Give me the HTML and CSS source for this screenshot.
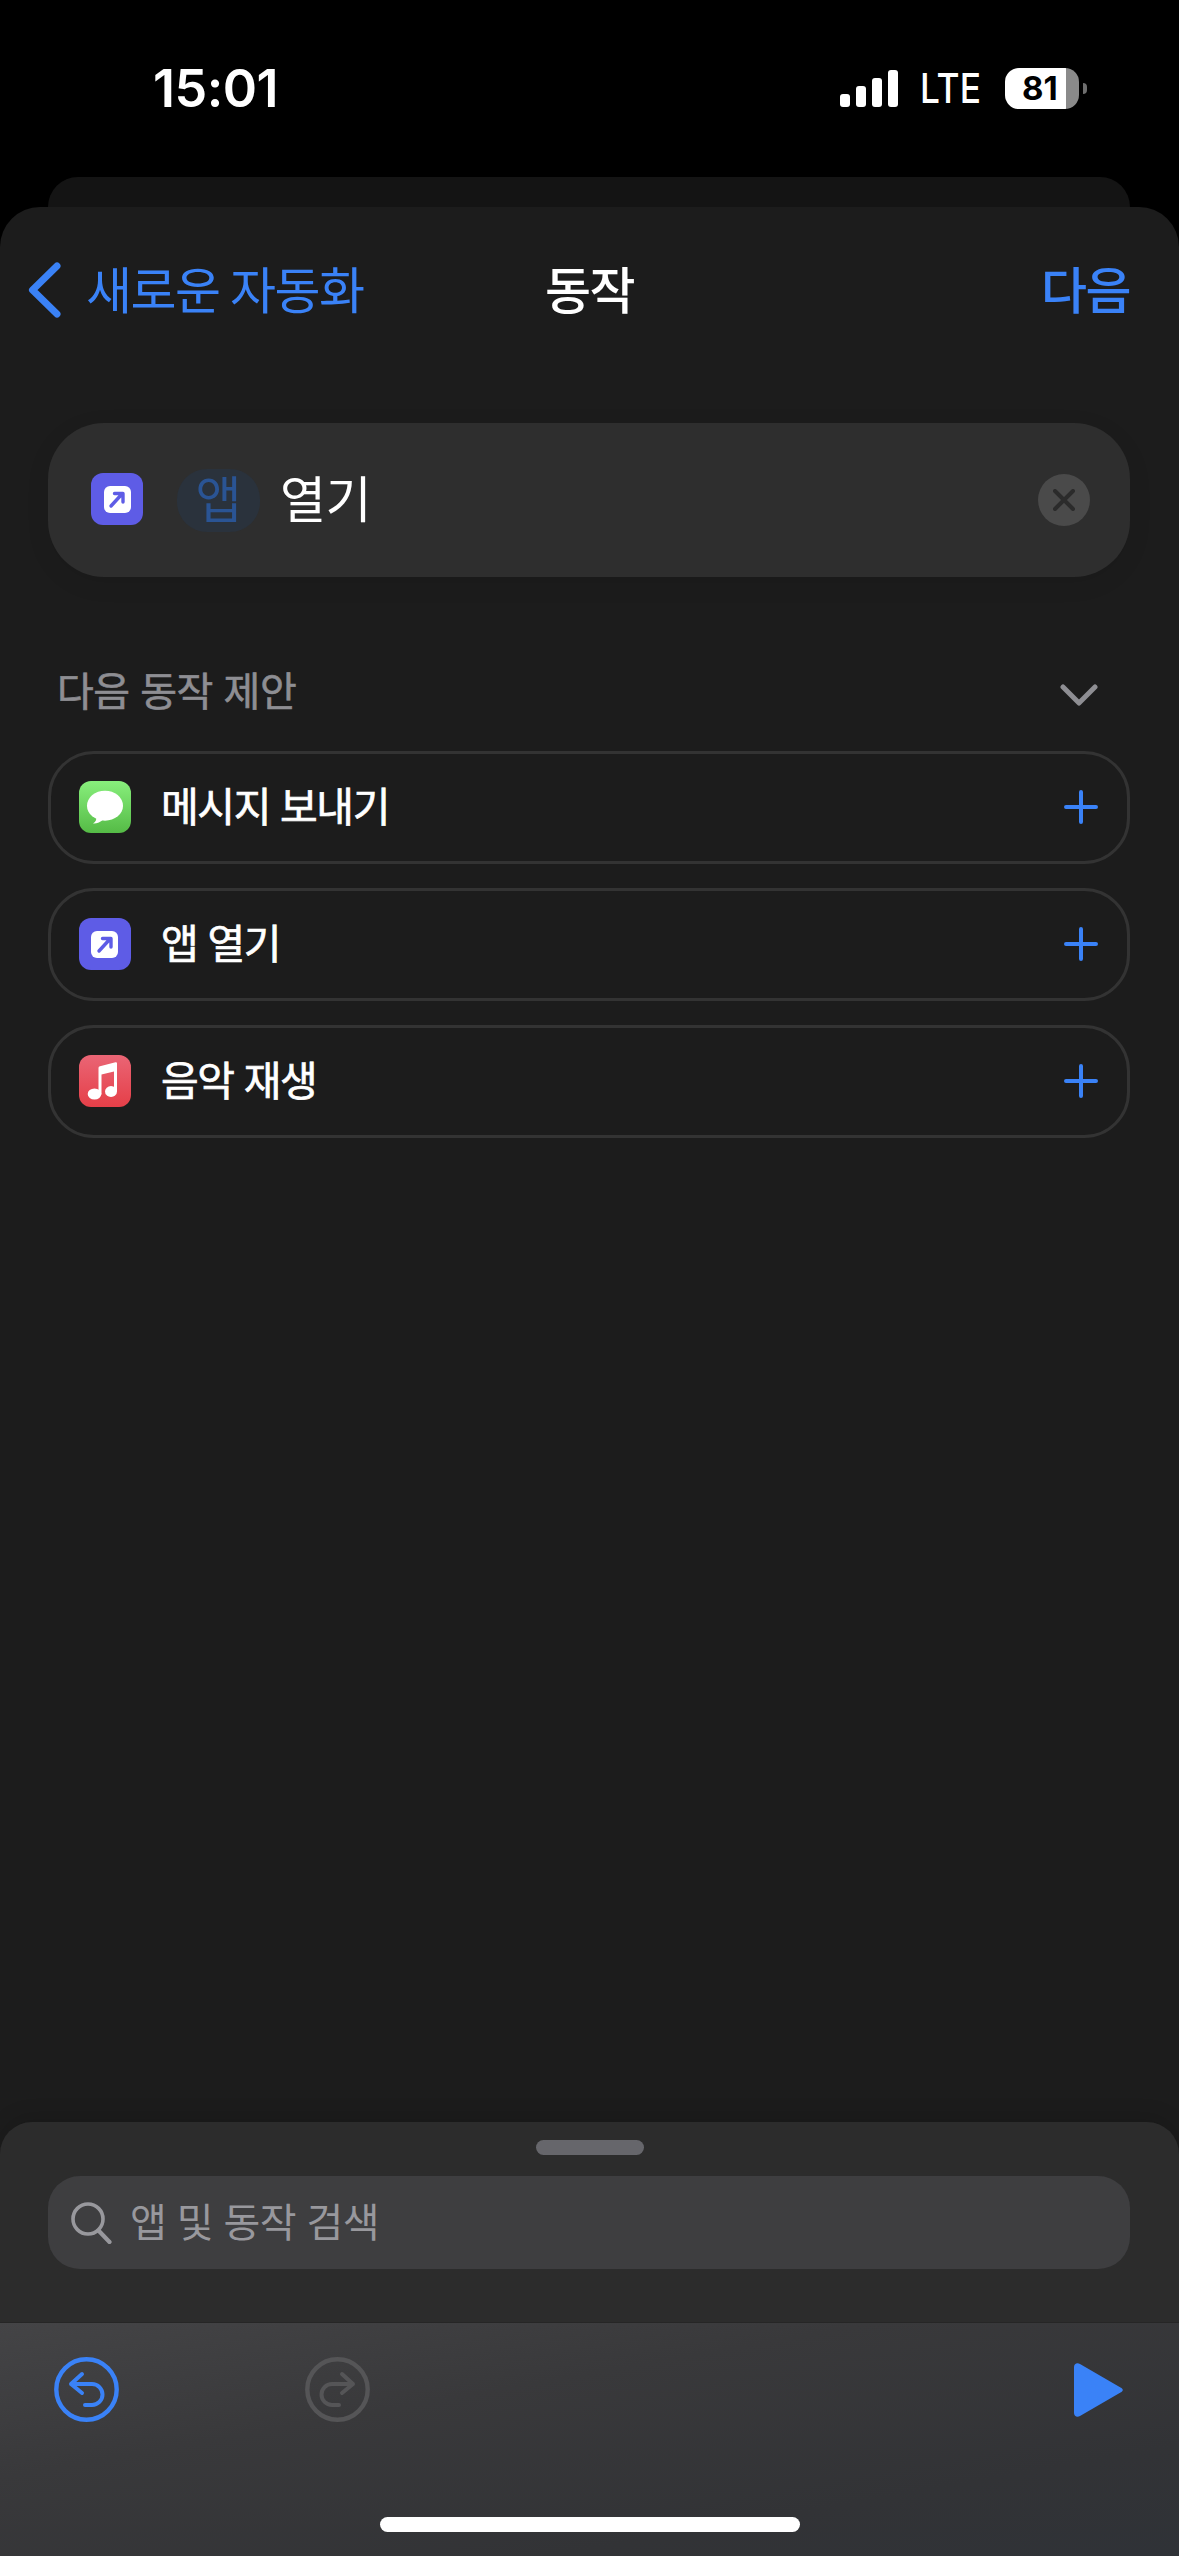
FILE: index.html
```html
<!DOCTYPE html>
<html lang="ko">
<head>
    <meta charset="UTF-8">
    <meta name="viewport" content="width=device-width, initial-scale=1.0">
    <title>동작</title>
    <link rel="stylesheet" href="styles.css">
</head>
<body>
<div class="phone">

    <div class="status-bar">
        <span class="time">15:01</span>
        <div class="status-icons">
            <div class="signal">
                <span class="bar bar1"></span>
                <span class="bar bar2"></span>
                <span class="bar bar3"></span>
                <span class="bar bar4"></span>
            </div>
            <span class="lte">LTE</span>
            <div class="battery">
                <div class="battery-body"><span>81</span></div>
                <span class="battery-cap"></span>
            </div>
        </div>
    </div>

    <div class="back-card"></div>

    <div class="sheet">
        <nav class="nav">
            <a class="nav-back">
                <svg class="nav-chevron" width="33" height="56" viewBox="0 0 33 56"><path d="M29 4 L4.500 28 L29 52" fill="none" stroke="#3a82f7" stroke-width="7" stroke-linecap="round" stroke-linejoin="round"/></svg>
                <span>새로운 자동화</span>
            </a>
            <span class="nav-title">동작</span>
            <a class="nav-next">다음</a>
        </nav>

        <div class="content">
            <div class="action-card">
                <svg class="app-icon" width="52" height="52" viewBox="0 0 52 52">
                    <rect width="52" height="52" rx="12" fill="#5e5ce6"/>
                    <rect x="13" y="13" width="27" height="27" rx="6" fill="#fff"/>
                    <path d="M20 33 L31 21 M23.500 20.500 H32 V29" fill="none" stroke="#5e5ce6" stroke-width="3.4" stroke-linecap="round" stroke-linejoin="round"/>
                </svg>
                <span class="chip">앱</span>
                <span class="action-name">열기</span>
                <span class="remove">
                    <svg width="22" height="22" viewBox="0 0 22 22"><path d="M2 2 L20 20 M20 2 L2 20" stroke="#2b2b2b" stroke-width="4" stroke-linecap="round"/></svg>
                </span>
            </div>

            <div class="suggest-head">
                <span class="head-label">다음 동작 제안</span>
                <svg class="head-chevron" width="38" height="23" viewBox="0 0 38 23"><path d="M3 3 L19 19 L35 3" fill="none" stroke="#8e8e93" stroke-width="5" stroke-linecap="round" stroke-linejoin="round"/></svg>
            </div>

            <div class="suggest-list">
                <div class="suggest-row">
                    <svg class="app-icon" width="52" height="52" viewBox="0 0 52 52">
                        <defs><linearGradient id="msgGreen" x1="0" y1="0" x2="0" y2="1"><stop offset="0" stop-color="#88ef7c"/><stop offset="1" stop-color="#55bb46"/></linearGradient></defs>
                        <rect width="52" height="52" rx="12" fill="url(#msgGreen)"/>
                        <ellipse cx="26" cy="24.7" rx="18" ry="15" fill="#fff"/>
                        <path d="M14 42.500 C17 41 18 38 17 34 L25 38 C21 41.500 17 43 14 42.500 Z" fill="#fff"/>
                    </svg>
                    <span class="row-label">메시지 보내기</span>
                    <svg class="plus" width="34" height="34" viewBox="0 0 34 34"><path d="M17 2 V32 M2 17 H32" stroke="#3a82f7" stroke-width="4" stroke-linecap="round"/></svg>
                </div>
                <div class="suggest-row">
                    <svg class="app-icon" width="52" height="52" viewBox="0 0 52 52">
                        <rect width="52" height="52" rx="12" fill="#5e5ce6"/>
                        <rect x="12" y="13" width="27" height="27" rx="6" fill="#fff"/>
                        <path d="M20 33 L31 21 M23.500 20.500 H32 V29" fill="none" stroke="#5e5ce6" stroke-width="3.4" stroke-linecap="round" stroke-linejoin="round"/>
                    </svg>
                    <span class="row-label">앱 열기</span>
                    <svg class="plus" width="34" height="34" viewBox="0 0 34 34"><path d="M17 2 V32 M2 17 H32" stroke="#3a82f7" stroke-width="4" stroke-linecap="round"/></svg>
                </div>
                <div class="suggest-row">
                    <svg class="app-icon" width="52" height="52" viewBox="0 0 52 52">
                        <defs><linearGradient id="musicRed" x1="0" y1="0" x2="0" y2="1"><stop offset="0" stop-color="#ea6575"/><stop offset="1" stop-color="#e53f48"/></linearGradient></defs>
                        <rect width="52" height="52" rx="12" fill="url(#musicRed)"/>
                        <path d="M19.500 13 C19.500 12 20 11.400 21 11.200 L36.500 7.200 C37.600 7 38 7.600 38 8.600 V36.500 H35 V16.500 L22.500 19.600 V39.500 H19.500 Z" fill="#fff"/>
                        <ellipse cx="15.500" cy="39" rx="6.800" ry="5.600" fill="#fff"/>
                        <ellipse cx="32" cy="36.500" rx="6" ry="5.400" fill="#fff"/>
                    </svg>
                    <span class="row-label">음악 재생</span>
                    <svg class="plus" width="34" height="34" viewBox="0 0 34 34"><path d="M17 2 V32 M2 17 H32" stroke="#3a82f7" stroke-width="4" stroke-linecap="round"/></svg>
                </div>
            </div>
        </div>

        <div class="drawer">
            <span class="grabber"></span>
            <div class="search">
                <svg width="41" height="42" viewBox="0 0 41 42"><circle cx="17" cy="17" r="15" fill="none" stroke="#98989d" stroke-width="3.6"/><path d="M27.500 28.500 L38.500 40" stroke="#98989d" stroke-width="4.2" stroke-linecap="round"/></svg>
                <span class="search-label">앱 및 동작 검색</span>
            </div>
        </div>

        <div class="toolbar">
            <div class="tool-row">
                <svg width="65" height="65" viewBox="0 0 65 65">
                    <circle cx="32.500" cy="32.500" r="30.200" fill="none" stroke="#3a82f7" stroke-width="4.4"/>
                    <path d="M17 27 H38 A10.500 10.500 0 0 1 38 48 H31 M28 17 L17 27 L28 36" fill="none" stroke="#3a82f7" stroke-width="4" stroke-linecap="round" stroke-linejoin="round"/>
                </svg>
                <svg class="redo" width="65" height="65" viewBox="0 0 65 65">
                    <circle cx="32.500" cy="32.500" r="30.200" fill="none" stroke="#555557" stroke-width="4.4"/>
                    <path d="M48 27 H27 A10.500 10.500 0 0 0 27 48 H34 M37 17 L48 27 L37 36" fill="none" stroke="#555557" stroke-width="4" stroke-linecap="round" stroke-linejoin="round"/>
                </svg>
                <svg class="play" width="49" height="54" viewBox="0 0 49 54">
                    <path d="M0 4 C0 1 3 -1 6 1 L46.500 24.500 C49.500 26 49.500 28 46.500 29.500 L6 53 C3 55 0 53 0 50 Z" fill="#3a82f7"/>
                </svg>
            </div>
            <span class="home-bar"></span>
        </div>
    </div>

</div>
</body>
</html>
```

FILE: styles.css
```css
* {
    box-sizing: border-box;
}
html, body {
    margin: 0;
    padding: 0;
    background-color: #000;
}
body {
    font-family: "Noto Sans CJK KR", "Noto Sans", sans-serif;
    color: #fff;
}
svg {
    display: block;
    flex-shrink: 0;
}
.phone {
    width: 1179px;
    height: 2556px;
    display: flex;
    flex-direction: column;
    overflow: hidden;
}

/* status bar */
.status-bar {
    height: 177px;
    padding: 64px 92px 0 153px;
    display: flex;
    justify-content: space-between;
    align-items: flex-start;
}
.time {
    padding-top: 1px;
    font-family: Inter, sans-serif;
    font-size: 52px;
    font-weight: 600;
    line-height: 48px;
    letter-spacing: -0.5px;
}
.status-icons {
    display: flex;
    align-items: center;
    height: 48px;
}
.signal {
    display: flex;
    align-items: flex-end;
    gap: 6px;
    height: 37px;
}
.bar {
    width: 10px;
    background-color: #fff;
    border-radius: 3px;
}
.bar1 { height: 13px; }
.bar2 { height: 21px; }
.bar3 { height: 29px; }
.bar4 { height: 37px; }
.lte {
    margin-left: 22px;
    width: 60px;
    font-family: Inter, sans-serif;
    font-size: 41px;
    font-weight: 500;
    line-height: 48px;
    transform: scaleX(0.86);
    transform-origin: left center;
}
.battery {
    margin-left: 25px;
    display: flex;
    align-items: center;
    gap: 4px;
}
.battery-body {
    width: 74px;
    height: 41px;
    border-radius: 14px;
    background: linear-gradient(to right, #fff 61px, #8a8a8a 61px);
    color: #000;
    font-family: Inter, sans-serif;
    font-size: 33px;
    font-weight: 700;
    line-height: 41px;
    padding-left: 17px;
}
.battery-cap {
    width: 4px;
    height: 11px;
    background-color: #6e6e6e;
    border-radius: 0 6px 6px 0;
}

.back-card {
    height: 30px;
    margin: 0 49px 0 48px;
    background-color: #141414;
    border-radius: 36px 36px 0 0;
}

/* main sheet */
.sheet {
    flex: 1;
    display: flex;
    flex-direction: column;
    background-color: #1c1c1c;
    border-radius: 40px 40px 0 0;
}
.nav {
    height: 166px;
    padding: 0 49px;
    display: grid;
    grid-template-columns: minmax(0, 1fr) auto minmax(0, 1fr);
    align-items: center;
    font-size: 50px;
    line-height: 60px;
    letter-spacing: -1.5px;
}
.nav-back {
    margin-left: -21px;
    display: flex;
    align-items: center;
    gap: 25px;
    color: #3a82f7;
    white-space: nowrap;
    word-spacing: -2px;
}
.nav-back span,
.nav-title,
.nav-next {
    padding-bottom: 6px;
}
.nav-title {
    font-weight: 500;
}
.nav-next {
    text-align: right;
    color: #3a82f7;
    font-weight: 500;
}

.content {
    flex: 1;
    padding: 50px 49px 0 48px;
}
.action-card {
    height: 154px;
    padding: 0 40px 0 43px;
    display: flex;
    align-items: center;
    background-color: #2e2e2e;
    border-radius: 56px;
    box-shadow: 0 6px 24px rgba(0, 0, 0, 0.08);
}
.action-card .app-icon {
    margin-bottom: 2px;
}
.chip {
    margin-left: 34px;
    width: 83px;
    height: 63px;
    padding-bottom: 8px;
    display: flex;
    align-items: center;
    justify-content: center;
    background-color: #2a323c;
    border-radius: 30px;
    color: #2a5494;
    font-size: 50px;
}
.action-name {
    margin-left: 20px;
    padding-bottom: 8px;
    font-size: 50px;
    line-height: 60px;
    letter-spacing: -0.5px;
}
.remove {
    margin-left: auto;
    width: 52px;
    height: 52px;
    display: flex;
    align-items: center;
    justify-content: center;
    background-color: #4a4a4a;
    border-radius: 50%;
}

.suggest-head {
    margin-top: 85px;
    height: 60px;
    padding: 0 32px 0 9px;
    display: flex;
    align-items: center;
    justify-content: space-between;
    color: #8e8e93;
    font-size: 40px;
}
.head-label {
    padding-bottom: 6px;
    letter-spacing: -0.5px;
    -webkit-text-stroke: 0.6px #8e8e93;
}
.head-chevron {
    margin-top: 6px;
}
.suggest-list {
    margin-top: 29px;
    display: flex;
    flex-direction: column;
    gap: 24px;
}
.suggest-row {
    height: 113px;
    padding: 0 29px 0 28px;
    display: flex;
    align-items: center;
    border: 3px solid #333;
    border-radius: 46px;
}
.suggest-row .app-icon {
    margin-bottom: 2px;
}
.row-label {
    margin-left: 30px;
    padding-bottom: 8px;
    font-size: 41px;
    letter-spacing: -1.4px;
    -webkit-text-stroke: 0.7px #fff;
}
.plus {
    margin-left: auto;
    margin-bottom: 1px;
}

/* search drawer and toolbar */
.drawer {
    height: 200px;
    padding: 18px 49px 0 48px;
    display: flex;
    flex-direction: column;
    background-color: #2c2c2c;
    border-radius: 32px 32px 0 0;
    box-shadow: 0 -6px 20px rgba(0, 0, 0, 0.12);
}
.grabber {
    align-self: center;
    margin-left: 2px;
    width: 108px;
    height: 15px;
    background-color: #66666b;
    border-radius: 8px;
}
.search {
    margin-top: 21px;
    height: 93px;
    padding-left: 23px;
    display: flex;
    align-items: center;
    gap: 18px;
    background-color: #3e3e40;
    border-radius: 32px;
    color: #98989d;
    font-size: 40px;
}
.search-label {
    padding-bottom: 6px;
    letter-spacing: -0.6px;
}
.toolbar {
    height: 234px;
    padding: 34px 56px 0 54px;
    display: flex;
    flex-direction: column;
    border-top: 1px solid #262626;
    background: linear-gradient(170deg, #444446 0%, #39393b 35%, #323336 75%, #2f3237 100%);
}
.tool-row {
    display: flex;
    align-items: center;
}
.redo {
    margin-left: 186px;
}
.play {
    margin-left: auto;
}
.home-bar {
    align-self: center;
    margin-top: 95px;
    margin-left: 2px;
    width: 420px;
    height: 15px;
    background-color: #fff;
    border-radius: 8px;
}
```
